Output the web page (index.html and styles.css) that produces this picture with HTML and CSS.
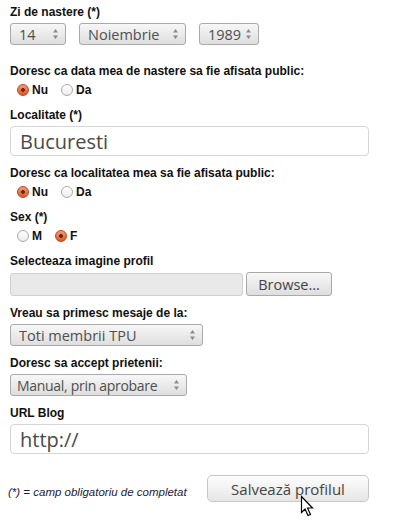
FILE: index.html
```html
<!DOCTYPE html>
<html lang="ro">
<head>
    <meta charset="UTF-8">
    <meta name="viewport" content="width=device-width, initial-scale=1.0">
    <title>Profil</title>
    <link rel="stylesheet" href="styles.css">
</head>
<body>
    <form class="profile-form">
        <div class="field field-first">
            <label class="field-label">Zi de nastere (*)</label>
            <div class="date-row">
                <div class="select-wrap w-day">
                    <select><option>14</option></select>
                    <span class="spin"><svg width="7" height="12" viewBox="0 0 7 12"><path d="M3.5 1 L6 4.5 L1 4.5 Z M3.5 11 L6 7.5 L1 7.5 Z" fill="#8a8a8a"/></svg></span>
                </div>
                <div class="select-wrap w-month">
                    <select><option>Noiembrie</option></select>
                    <span class="spin"><svg width="7" height="12" viewBox="0 0 7 12"><path d="M3.5 1 L6 4.5 L1 4.5 Z M3.5 11 L6 7.5 L1 7.5 Z" fill="#8a8a8a"/></svg></span>
                </div>
                <div class="select-wrap w-year">
                    <select><option>1989</option></select>
                    <span class="spin"><svg width="7" height="12" viewBox="0 0 7 12"><path d="M3.5 1 L6 4.5 L1 4.5 Z M3.5 11 L6 7.5 L1 7.5 Z" fill="#8a8a8a"/></svg></span>
                </div>
            </div>
        </div>

        <div class="field">
            <label class="field-label">Doresc ca data mea de nastere sa fie afisata public:</label>
            <div class="radio-row">
                <label class="radio-item"><input type="radio" name="dataPublic" checked> Nu</label>
                <label class="radio-item"><input type="radio" name="dataPublic"> Da</label>
            </div>
        </div>

        <div class="field">
            <label class="field-label">Localitate (*)</label>
            <input class="text-input" type="text" value="Bucuresti">
        </div>

        <div class="field">
            <label class="field-label">Doresc ca localitatea mea sa fie afisata public:</label>
            <div class="radio-row">
                <label class="radio-item"><input type="radio" name="locPublic" checked> Nu</label>
                <label class="radio-item"><input type="radio" name="locPublic"> Da</label>
            </div>
        </div>

        <div class="field">
            <label class="field-label">Sex (*)</label>
            <div class="radio-row">
                <label class="radio-item"><input type="radio" name="sex"> M</label>
                <label class="radio-item"><input type="radio" name="sex" checked> F</label>
            </div>
        </div>

        <div class="field">
            <label class="field-label">Selecteaza imagine profil</label>
            <div class="file-row">
                <div class="file-box"></div>
                <button type="button" class="browse-btn">Browse...</button>
            </div>
        </div>

        <div class="field">
            <label class="field-label">Vreau sa primesc mesaje de la:</label>
            <div class="select-wrap w-messages">
                <select><option>Toti membrii TPU</option></select>
                <span class="spin"><svg width="7" height="12" viewBox="0 0 7 12"><path d="M3.5 1 L6 4.5 L1 4.5 Z M3.5 11 L6 7.5 L1 7.5 Z" fill="#8a8a8a"/></svg></span>
            </div>
        </div>

        <div class="field">
            <label class="field-label">Doresc sa accept prietenii:</label>
            <div class="select-wrap w-friends">
                <select><option>Manual, prin aprobare</option></select>
                <span class="spin"><svg width="7" height="12" viewBox="0 0 7 12"><path d="M3.5 1 L6 4.5 L1 4.5 Z M3.5 11 L6 7.5 L1 7.5 Z" fill="#8a8a8a"/></svg></span>
            </div>
        </div>

        <div class="field">
            <label class="field-label">URL Blog</label>
            <input class="text-input" type="text" value="http://">
        </div>

        <div class="form-footer">
            <span class="required-note">(*) = camp obligatoriu de completat</span>
            <div class="save-wrap">
                <button type="button" class="save-btn">Salvează profilul</button>
                <svg class="cursor" width="14" height="22" viewBox="0 0 14 22"><path d="M1.5 1.5 L1.5 17.5 L5 14 L8 20.5 L10.5 19.5 L7.5 13 L12.5 13 Z" fill="#fff" stroke="#000" stroke-width="1.2" stroke-linejoin="miter"/></svg>
            </div>
        </div>
    </form>
</body>
</html>
```

FILE: styles.css
```css
body {
    margin: 0;
    padding: 0;
    background: #fff;
    font-family: 'Liberation Sans', Arial, sans-serif;
    color: #111;
}
.profile-form {
    padding: 5px 10px 0 10px;
}
.field {
    margin-bottom: 10px;
}
.field-first {
    margin-bottom: 19px;
}
.field-label {
    display: block;
    font-size: 12px;
    font-weight: bold;
    line-height: 15px;
    margin-bottom: 3px;
}
.date-row {
    display: flex;
    gap: 13px;
}
.select-wrap {
    position: relative;
    height: 22px;
}
.select-wrap select {
    -webkit-appearance: none;
    appearance: none;
    width: 100%;
    height: 22px;
    margin: 0;
    padding: 0 0 0 8px;
    border: 1px solid #a9a9a9;
    border-radius: 3px;
    background: linear-gradient(#f7f7f7, #dedede);
    font-family: 'Open Sans', sans-serif;
    font-size: 14.5px;
    color: #4f4f4f;
    box-sizing: border-box;
}
.spin {
    position: absolute;
    right: 7px;
    top: 5px;
    line-height: 0;
}
.w-day { width: 56px; }
.w-month { width: 107px; }
.w-year { width: 60px; }
.w-messages { width: 193px; }
.w-friends { width: 177px; }
.w-friends select {
    font-size: 14px;
    letter-spacing: -0.3px;
    padding-left: 6px;
}
.radio-row {
    display: flex;
    gap: 13px;
    padding-left: 7px;
    height: 16px;
    align-items: center;
}
.radio-item {
    display: flex;
    align-items: center;
    gap: 3px;
    font-size: 12px;
    font-weight: bold;
}
.radio-item input {
    -webkit-appearance: none;
    appearance: none;
    width: 12px;
    height: 12px;
    margin: 0;
    border: 1px solid #aaa;
    border-radius: 50%;
    background: linear-gradient(#fff, #ececec);
    box-sizing: border-box;
}
.radio-item input:checked {
    border-color: #c2461c;
    background: radial-gradient(circle, #6a2a14 0 1.6px, transparent 2.2px), linear-gradient(#f59a72, #e0562a);
}
.text-input {
    display: block;
    width: 359px;
    height: 30px;
    margin: 0;
    padding: 0 9px;
    border: 1px solid #d6d6d6;
    border-radius: 4px;
    font-family: 'Open Sans', sans-serif;
    font-size: 20px;
    color: #4a4a4a;
    box-sizing: border-box;
}
.file-row {
    display: flex;
    align-items: flex-start;
    gap: 3px;
}
.file-box {
    width: 233px;
    height: 23px;
    margin-top: 1px;
    background: #e9e9e9;
    border: 1px solid #cfcfcf;
    border-radius: 3px;
    box-sizing: border-box;
}
.browse-btn {
    width: 86px;
    height: 24px;
    margin: 0;
    padding: 0;
    border: 1px solid #a9a9a9;
    border-radius: 3px;
    background: linear-gradient(#f7f7f7, #dedede);
    font-family: 'Open Sans', sans-serif;
    font-size: 14.5px;
    color: #444;
}
.form-footer {
    display: flex;
    align-items: flex-start;
    justify-content: space-between;
    width: 361px;
    margin-left: -2px;
    margin-top: 21px;
}
.required-note {
    font-size: 11.5px;
    font-style: italic;
    color: #1a1a3a;
    padding-top: 11px;
}
.save-wrap {
    position: relative;
    height: 44px;
}
.save-btn {
    display: block;
    width: 162px;
    height: 27px;
    margin: 0;
    padding: 0;
    border: 1px solid #c8c8c8;
    border-radius: 5px;
    background: linear-gradient(#fdfdfd, #e6e6e6);
    font-family: 'Open Sans', sans-serif;
    font-size: 15px;
    color: #444;
}
.cursor {
    position: absolute;
    left: 93px;
    top: 20px;
    z-index: 2;
    display: block;
}
```
